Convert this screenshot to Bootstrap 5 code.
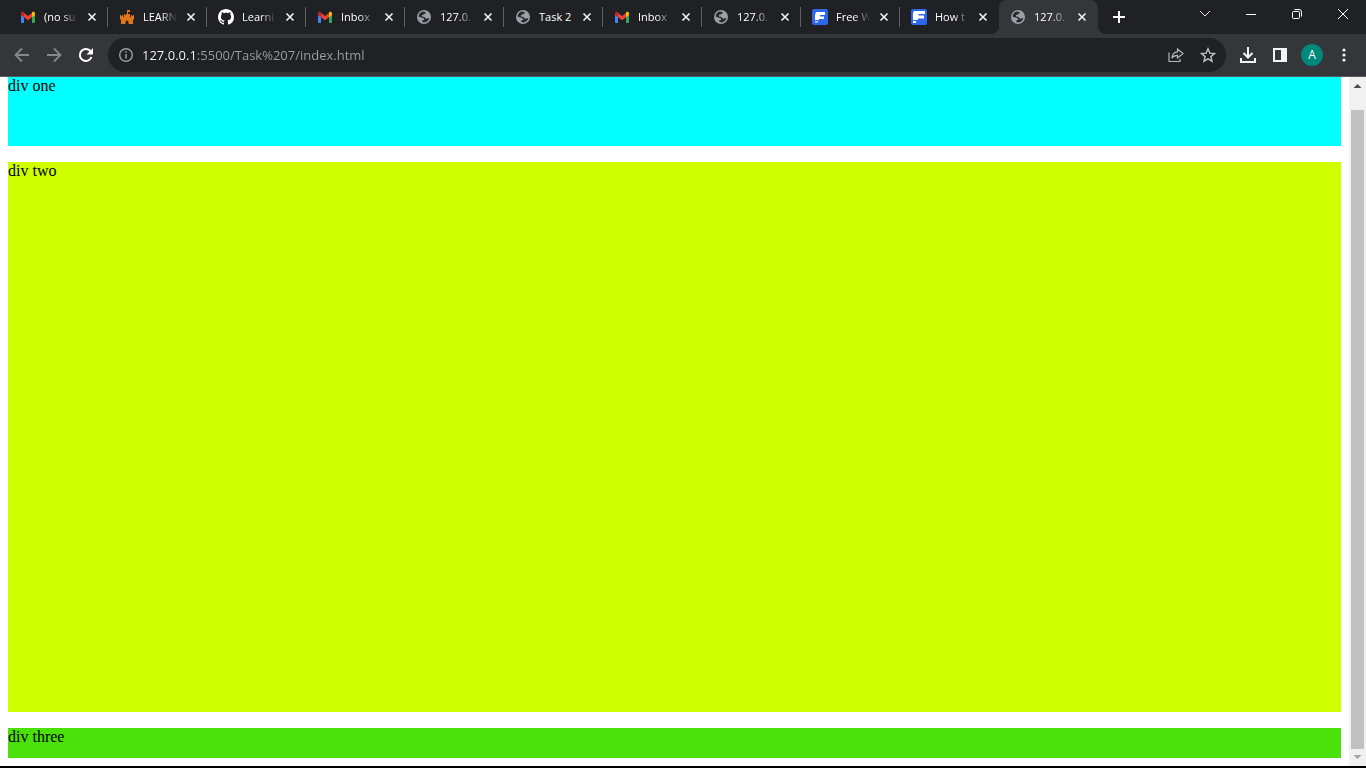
<!DOCTYPE html>
<html lang="en">
<head>
<meta charset="utf-8">
<meta name="viewport" content="width=device-width, initial-scale=1">
<title>127.0.0.1:5500/Task%207/index.html</title>
<link href="https://cdn.jsdelivr.net/npm/bootstrap@5.3.0/dist/css/bootstrap.min.css" rel="stylesheet">
<style>
  :root { --frame: #202124; --bar: #35363a; }
  body { font-family: "Open Sans", "Noto Sans", sans-serif; background: #000; }
  svg { display: block; flex: none; }
  button.plain { border: 0; padding: 0; background: none; color: inherit; display: flex; align-items: center; justify-content: center; flex: none; }

  .tab-strip { background: var(--frame); color: #fff; height: 34px; padding-left: 9px; }
  .browser-tab { flex: 0 1 99px; min-width: 0; height: 34px; padding: 0 8px 0 11px; position: relative; }
  .browser-tab:not(.current):not(.before-current)::after { content: ""; position: absolute; right: 0; top: 7px; width: 1px; height: 20px; background: #5f6368; }
  .browser-tab.current { background: var(--bar); border-radius: 8px 8px 0 0; }
  .browser-tab.current::before, .browser-tab.current::after { content: ""; position: absolute; bottom: 0; width: 8px; height: 8px; }
  .browser-tab.current::before { left: -8px; background: radial-gradient(circle at 0 0, transparent 8px, var(--bar) 8px); }
  .browser-tab.current::after { right: -8px; background: radial-gradient(circle at 100% 0, transparent 8px, var(--bar) 8px); }
  button.tab-name { border: 0; background: none; color: inherit; padding: 0; margin-left: 8px; width: 36px; font-size: 11px; line-height: 18px; text-align: left; white-space: nowrap; overflow: hidden; }
  .fade-end { -webkit-mask-image: linear-gradient(90deg, #000 18px, transparent 34px); mask-image: linear-gradient(90deg, #000 18px, transparent 34px); }
  .close-tab { width: 16px; height: 16px; margin-left: 4px; }
  .window-button { width: 46px; height: 28px; }

  .tool-bar { background: var(--bar); height: 43px; padding: 0 6px; border-bottom: 1px solid #5a5b5e; color: #f1f3f4; }
  .tool-button { width: 32px; height: 32px; }
  .address { background: var(--frame); border-radius: 17px; height: 34px; padding: 0 10px; margin: 0 6px; color: #9aa0a6; }
  .address input { border: 0; outline: 0; padding: 0; margin-left: 8px; min-width: 0; font-size: 13px; line-height: 20px; color: #9aa0a6; background: linear-gradient(90deg, #fff 54px, #9aa0a6 54px); -webkit-background-clip: text; background-clip: text; -webkit-text-fill-color: transparent; }
  .avatar { width: 22px; height: 22px; border-radius: 50%; background: #00897b; color: #fff; font-size: 12px; line-height: 22px; }

  .page-view { background: #fff; margin-bottom: 2px; min-height: 0; overflow: hidden; }
  .document { padding: 0 8px 8px; gap: 16px; font: 16px/18px "Liberation Serif", serif; color: #000; }
  .box-one { height: 69px; background: #0ff; }
  .box-two { height: 550px; background: #d0ff00; }
  .box-three { height: 30px; background: #4be20b; }
  .scroll-track { width: 17px; background: #f1f1f1; }
  .scroll-track button.plain { height: 17px; width: 17px; }
  .scroll-thumb { background: #c1c1c1; margin: 16px 2px 0; }
</style>
</head>
<body>
<svg width="0" height="0" class="position-absolute" aria-hidden="true">
  <symbol id="mail" viewBox="0 0 16 16">
    <path fill="#4285f4" d="M1 5v8a1 1 0 0 0 1 1h2V7z"/>
    <path fill="#34a853" d="M12 7v7h2a1 1 0 0 0 1-1V5z"/>
    <path fill="#fbbc04" d="M12 4v4.200l3-2.200V4.500C15 2.700 13.300 2.300 12.200 3z"/>
    <path fill="#ea4335" d="M4 8.200V4l4 3 4-3v4.200l-4 3z"/>
    <path fill="#c5221f" d="M1 4.500V6l3 2.200V4l-.3-.9C2.600 2.300 1 2.800 1 4.500z"/>
  </symbol>
  <symbol id="castle" viewBox="0 0 16 16">
    <path fill="#e0751b" d="M8 1h3v2H9v2h2v3h1V6h1v1h1V6h1v4l-1 1v4H9.500v-2a1.500 1.500 0 0 0-3 0v2H2v-4l-1-1V6h1v1h1V6h1v2h1V5h1v1h1V5h1z"/>
  </symbol>
  <symbol id="github" viewBox="0 0 16 16">
    <path fill="#fff" d="M8 0C3.580 0 0 3.580 0 8c0 3.540 2.290 6.530 5.470 7.590.4.070.55-.17.55-.38 0-.19-.01-.82-.01-1.490-2.010.37-2.530-.49-2.690-.94-.09-.23-.48-.94-.82-1.130-.28-.15-.68-.52-.01-.53.63-.01 1.080.58 1.230.82.72 1.210 1.870.87 2.330.66.07-.52.28-.87.51-1.070-1.780-.2-3.640-.89-3.640-3.950 0-.87.31-1.590.82-2.150-.08-.2-.36-1.020.08-2.120 0 0 .67-.21 2.200.82.64-.18 1.320-.27 2-.27s1.360.09 2 .27c1.530-1.040 2.200-.82 2.200-.82.44 1.100.16 1.920.08 2.120.51.56.82 1.270.82 2.150 0 3.070-1.870 3.750-3.650 3.950.29.25.54.73.54 1.480 0 1.070-.01 1.930-.01 2.200 0 .21.15.46.55.38A8.010 8.010 0 0 0 16 8c0-4.420-3.580-8-8-8"/>
  </symbol>
  <symbol id="globe" viewBox="0 0 16 16">
    <circle cx="8" cy="8" r="7" fill="#9aa0a6"/>
    <path fill="#2a2b2f" d="M2.500 7.500C2.700 5 4.500 3 7 2.600L9.500 3v1.500L7.500 5.500 6 6v1.500L8.500 8l1 1.500h2L13.400 9C13 11.500 11 13.300 8.500 13.500L6.500 13l-.5-1.500 2-.5V9.500L6 8.700z"/>
  </symbol>
  <symbol id="fblock" viewBox="0 0 16 16">
    <rect width="16" height="16" rx="2" fill="#2f67ea"/>
    <path fill="#fff" d="M4 3h9v3H8v1.500h4v2.500H7v1H3V6z"/><path fill="#c9d8fb" d="M3 12h3v1.500H3z"/>
  </symbol>
  <symbol id="fwide" viewBox="0 0 16 16">
    <rect width="16" height="16" rx="2" fill="#2f67ea"/>
    <path fill="#fff" d="M3 2h11v3H7.500v1.500H13v3H7V11H2V4z"/><path fill="#fff" d="M2 12h3v2H2z"/>
  </symbol>
  <symbol id="cross" viewBox="0 0 16 16">
    <path stroke="#f1f3f4" stroke-width="1.600" d="M4.500 4.500l7 7M11.500 4.500l-7 7"/>
  </symbol>
</svg>

<div class="d-flex flex-column vh-100">
  <header>
    <div class="tab-strip d-flex">
      <ul class="nav flex-nowrap flex-grow-1" aria-label="Open tabs">
        <li class="browser-tab d-flex align-items-center"><svg width="16" height="16"><use href="#mail"/></svg><button class="tab-name fade-end">(no su</button><button class="plain close-tab" aria-label="Close tab"><svg width="16" height="16"><use href="#cross"/></svg></button></li>
        <li class="browser-tab d-flex align-items-center"><svg width="16" height="16"><use href="#castle"/></svg><button class="tab-name fade-end">LEARN</button><button class="plain close-tab" aria-label="Close tab"><svg width="16" height="16"><use href="#cross"/></svg></button></li>
        <li class="browser-tab d-flex align-items-center"><svg width="16" height="16"><use href="#github"/></svg><button class="tab-name fade-end">Learni</button><button class="plain close-tab" aria-label="Close tab"><svg width="16" height="16"><use href="#cross"/></svg></button></li>
        <li class="browser-tab d-flex align-items-center"><svg width="16" height="16"><use href="#mail"/></svg><button class="tab-name fade-end">Inbox</button><button class="plain close-tab" aria-label="Close tab"><svg width="16" height="16"><use href="#cross"/></svg></button></li>
        <li class="browser-tab d-flex align-items-center"><svg width="16" height="16"><use href="#globe"/></svg><button class="tab-name fade-end">127.0.</button><button class="plain close-tab" aria-label="Close tab"><svg width="16" height="16"><use href="#cross"/></svg></button></li>
        <li class="browser-tab d-flex align-items-center"><svg width="16" height="16"><use href="#globe"/></svg><button class="tab-name">Task 2</button><button class="plain close-tab" aria-label="Close tab"><svg width="16" height="16"><use href="#cross"/></svg></button></li>
        <li class="browser-tab d-flex align-items-center"><svg width="16" height="16"><use href="#mail"/></svg><button class="tab-name fade-end">Inbox</button><button class="plain close-tab" aria-label="Close tab"><svg width="16" height="16"><use href="#cross"/></svg></button></li>
        <li class="browser-tab d-flex align-items-center"><svg width="16" height="16"><use href="#globe"/></svg><button class="tab-name fade-end">127.0.</button><button class="plain close-tab" aria-label="Close tab"><svg width="16" height="16"><use href="#cross"/></svg></button></li>
        <li class="browser-tab d-flex align-items-center"><svg width="16" height="16"><use href="#fblock"/></svg><button class="tab-name fade-end">Free W</button><button class="plain close-tab" aria-label="Close tab"><svg width="16" height="16"><use href="#cross"/></svg></button></li>
        <li class="browser-tab before-current d-flex align-items-center"><svg width="16" height="16"><use href="#fwide"/></svg><button class="tab-name fade-end">How t</button><button class="plain close-tab" aria-label="Close tab"><svg width="16" height="16"><use href="#cross"/></svg></button></li>
        <li class="browser-tab current d-flex align-items-center"><svg width="16" height="16"><use href="#globe"/></svg><button class="tab-name fade-end">127.0.</button><button class="plain close-tab" aria-label="Close tab"><svg width="16" height="16"><use href="#cross"/></svg></button></li>
        <li class="d-flex align-items-center ps-2"><button class="plain ms-1" aria-label="New tab"><svg width="20" height="20" viewBox="0 0 20 20"><path d="M9 4v12M3 10h12" stroke="#fff" stroke-width="2"/></svg></button></li>
      </ul>
      <div class="d-flex">
        <button class="plain window-button" aria-label="Search tabs"><svg width="12" height="12" viewBox="0 0 12 12"><path d="M1 3l5 5 5-5" fill="none" stroke="#e0e0e0"/></svg></button>
        <button class="plain window-button" aria-label="Minimize"><svg width="12" height="12" viewBox="0 0 12 12"><path d="M1 6.500h10" stroke="#fff"/></svg></button>
        <button class="plain window-button" aria-label="Restore"><svg width="12" height="12" viewBox="0 0 12 12"><g fill="none" stroke="#fff"><rect x="1.500" y="3.500" width="7" height="7" rx="1"/><path d="M3.500 1.500H8a2.500 2.500 0 0 1 2.500 2.500v4.500"/></g></svg></button>
        <button class="plain window-button" aria-label="Close"><svg width="12" height="12" viewBox="0 0 12 12"><path d="M1 1l10 10M11 1L1 11" stroke="#fff"/></svg></button>
      </div>
    </div>

    <div class="tool-bar d-flex align-items-center">
      <button class="plain tool-button" aria-label="Back"><svg width="16" height="16" viewBox="0 0 16 16"><path d="M15 8H2M8 1.500L1.500 8 8 14.500" fill="none" stroke="#85878b" stroke-width="1.800"/></svg></button>
      <button class="plain tool-button" aria-label="Forward"><svg width="16" height="16" viewBox="0 0 16 16"><path d="M1 8h13M8 1.500L14.500 8 8 14.500" fill="none" stroke="#85878b" stroke-width="1.800"/></svg></button>
      <button class="plain tool-button" aria-label="Reload"><svg width="16" height="16" viewBox="0 0 16 16"><path d="M13.500 10a6 6 0 1 1-1.300-6.200L14 5.500" fill="none" stroke="#fff" stroke-width="2"/><path d="M15 1v6.500H8.500z" fill="#fff"/></svg></button>
      <form class="address d-flex align-items-center flex-grow-1" onsubmit="return false">
        <svg width="16" height="16" viewBox="0 0 16 16"><circle cx="8" cy="8" r="6.300" fill="none" stroke="#9aa0a6" stroke-width="1.400"/><path d="M8 7v4.500M8 4.200v1.600" stroke="#9aa0a6" stroke-width="1.500"/></svg>
        <input class="flex-grow-1" type="text" aria-label="Address" value="127.0.0.1:5500/Task%207/index.html" spellcheck="false">
        <button type="button" class="plain" aria-label="Share"><svg width="16" height="16" viewBox="0 0 16 16"><path d="M1 5.500V14.500h11V12M9.500 2v2.800C6 5 4.200 7.500 3.800 11.200 5.200 9.200 7 8.300 9.500 8.300V11L15 6.500z" fill="none" stroke="#b4b7bb" stroke-width="1.200"/></svg></button>
        <button type="button" class="plain ms-3" aria-label="Bookmark"><svg width="16" height="16" viewBox="0 0 16 16"><path d="M8 1.800l1.800 4.300 4.700.4-3.600 3.100 1.100 4.600L8 11.800l-4 2.400 1.100-4.600L1.500 6.500l4.700-.4z" fill="none" stroke="#bdc1c6" stroke-width="1.400"/></svg></button>
      </form>
      <button class="plain tool-button" aria-label="Downloads"><svg width="16" height="16" viewBox="0 0 16 16"><path d="M8 0v10M3.500 6L8 10.500 12.500 6M1 11v4h14v-4" fill="none" stroke="#f1f3f4" stroke-width="2"/></svg></button>
      <button class="plain tool-button" aria-label="Side panel"><svg width="16" height="16" viewBox="0 0 16 16"><path d="M1 1h14v14H1zM3 3v10h6V3z" fill="#f1f3f4" fill-rule="evenodd"/></svg></button>
      <button class="plain tool-button" aria-label="Profile"><span class="avatar">A</span></button>
      <button class="plain tool-button" aria-label="Menu"><svg width="16" height="16" viewBox="0 0 16 16"><g fill="#f1f3f4"><circle cx="8" cy="3" r="1.600"/><circle cx="8" cy="8" r="1.600"/><circle cx="8" cy="13" r="1.600"/></g></svg></button>
    </div>
  </header>

  <div class="page-view d-flex flex-grow-1">
    <main class="document d-flex flex-column flex-grow-1">
      <div class="box-one flex-shrink-0">div one</div>
      <div class="box-two flex-shrink-0">div two</div>
      <div class="box-three flex-shrink-0">div three</div>
    </main>
    <div class="scroll-track d-flex flex-column">
      <button class="plain" aria-label="Scroll up"><svg width="17" height="17" viewBox="0 0 17 17"><path d="M4.500 11L8.500 7l4 4z" fill="#505050"/></svg></button>
      <div class="scroll-thumb flex-grow-1"></div>
      <button class="plain" aria-label="Scroll down"><svg width="17" height="17" viewBox="0 0 17 17"><path d="M4.500 6l4 4 4-4z" fill="#a3a3a3"/></svg></button>
    </div>
  </div>
</div>
<script src="https://cdn.jsdelivr.net/npm/bootstrap@5.3.0/dist/js/bootstrap.bundle.min.js"></script>
</body>
</html>
